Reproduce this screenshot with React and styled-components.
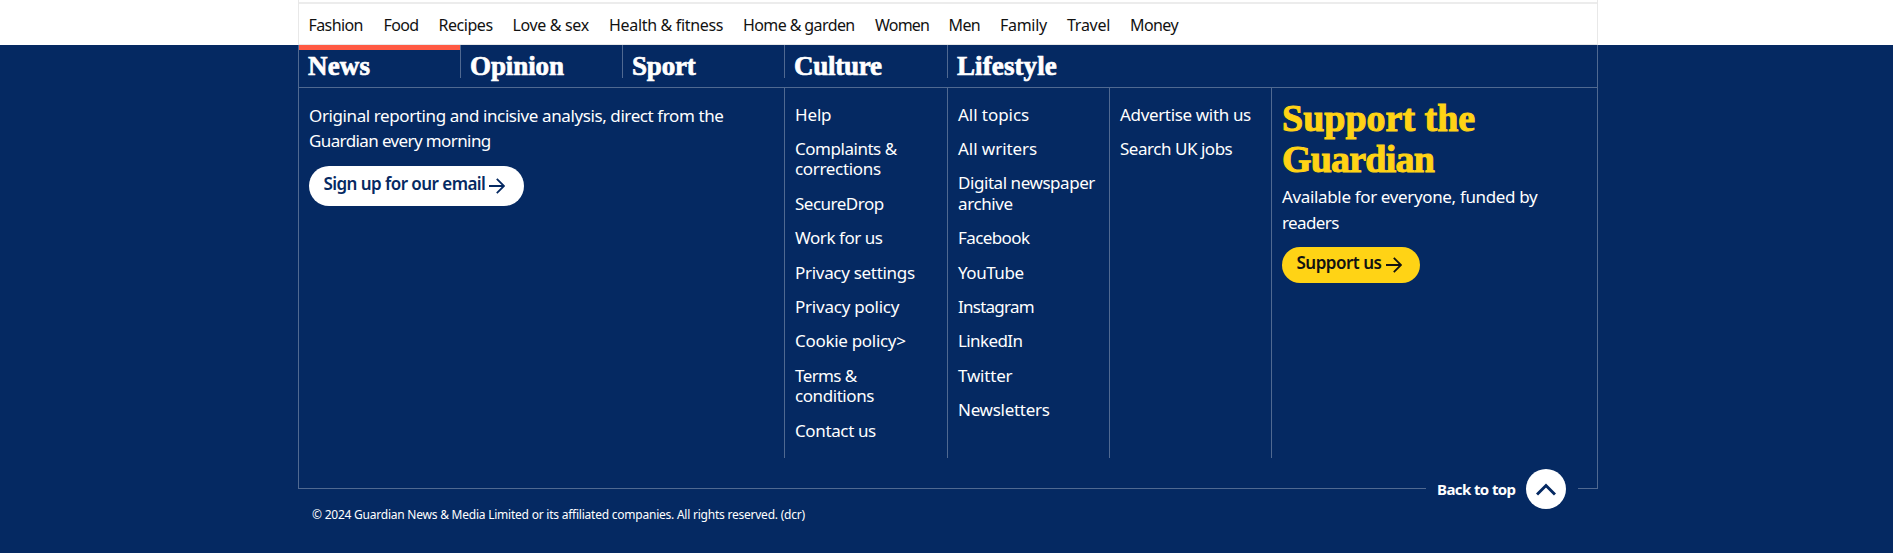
import React from 'react';
import styled, { createGlobalStyle, css } from 'styled-components';

const navy = '#052962';
const line = '#506991';
const sans = '"Noto Sans", "Open Sans", sans-serif';
const serif = '"Liberation Serif", "Times New Roman", serif';

const GlobalStyle = createGlobalStyle`
  * { box-sizing: border-box; }
  body { margin: 0; background: ${navy}; font-family: ${sans}; color: #fff; }
  ul { list-style: none; margin: 0; padding: 0; }
  p, h2 { margin: 0; }
  a { color: inherit; text-decoration: none; }
`;

const Page = styled.div`
  height: 553px;
  overflow: hidden;
`;

const TopBar = styled.div`
  height: 45px;
  background: #fff;
`;

const TopFrame = styled.div`
  width: 1300px;
  height: 45px;
  margin: 0 auto 0 298px;
  padding-top: 2px;
  border: solid #e8e8e8;
  border-width: 0 1px 1px;
`;

const TopicList = styled.ul`
  display: flex;
  height: 42px;
  padding: 10px 0 0 9.5px;
  border-top: 2px solid #ececec;
  font-size: 16px;
  line-height: 22px;
  color: #121212;
`;

const Topic = styled.li`
  width: ${(p) => p.$width}px;
  letter-spacing: ${(p) => p.$spacing}px;
  white-space: nowrap;
`;

const Frame = styled.footer`
  width: 1300px;
  height: 444px;
  margin-left: 298px;
  border: solid ${line};
  border-width: 0 1px 0;
`;

const Pillars = styled.ul`
  display: flex;
  height: 43px;
  border-bottom: 1px solid ${line};
`;

const Pillar = styled.li`
  width: ${(p) => p.$width}px;
  height: 33px;
  padding: 6px 0 0 9px;
  border-left: ${(p) => (p.$active ? 'none' : `1px solid ${line}`)};
  box-shadow: ${(p) => (p.$active ? 'inset 0 5px 0 #ff5943' : 'none')};
  font: bold 27px/30px ${serif};
  letter-spacing: ${(p) => p.$spacing}px;
  -webkit-text-stroke: 0.7px currentColor;
`;

const Columns = styled.div`
  display: flex;
  height: 370px;
`;

const Column = styled.section`
  width: ${(p) => p.$width}px;
  padding: ${(p) => p.$top}px 0 0 10px;
  ${(p) => p.$ruled && css`border-left: 1px solid ${line};`}
`;

const Copy = styled.p`
  margin-top: ${(p) => p.$gap || 0}px;
  font-size: 17px;
  line-height: ${(p) => p.$leading}px;
  white-space: nowrap;
`;

const TextLine = styled.span`
  display: block;
  letter-spacing: ${(p) => p.$spacing}px;
`;

const Links = styled.ul`
  display: flex;
  flex-direction: column;
  gap: 14px;
  font-size: 17px;
  line-height: 20.4px;
  white-space: nowrap;
`;

const SupportHeading = styled.h2`
  font: bold 38px/41px ${serif};
  color: #ffd315;
  white-space: nowrap;
  -webkit-text-stroke: 1px currentColor;
`;

const Pill = styled.a`
  display: flex;
  align-items: center;
  width: ${(p) => p.$width}px;
  height: ${(p) => p.$height}px;
  margin-top: ${(p) => p.$gap}px;
  padding: 0 0 4px 14.5px;
  border-radius: 20px;
  background: ${(p) => p.$fill};
  color: ${(p) => p.$ink};
  font-size: 17px;
  font-weight: 600;
  line-height: 24px;
  white-space: nowrap;
`;

const PillLabel = styled.span`
  width: ${(p) => p.$width}px;
  letter-spacing: ${(p) => p.$spacing}px;
`;

const PillArrow = styled.svg`
  display: block;
  margin-top: 4px;
`;

const BottomRule = styled.div`
  display: flex;
  justify-content: flex-end;
  height: 31px;
`;

const Rule = styled.span`
  width: ${(p) => p.$width}px;
  border-bottom: 1px solid ${line};
`;

const BackToTop = styled.a`
  display: flex;
  align-items: center;
  flex-shrink: 0;
  width: 152px;
  height: 40px;
  margin-top: 11px;
  padding-left: 11px;
  font-size: 15px;
  font-weight: 700;
  letter-spacing: -0.6px;
  white-space: nowrap;
`;

const TopLabel = styled.span`
  width: 89px;
`;

const Circle = styled.span`
  display: grid;
  place-items: center;
  width: 40px;
  height: 40px;
  border-radius: 50%;
  background: #fff;
`;

const Copyright = styled.p`
  padding: 17px 0 0 312px;
  font-size: 12px;
  line-height: 18px;
  letter-spacing: -0.23px;
`;

const topics = [
  ['Fashion', 75, -0.6],
  ['Food', 55, -0.6],
  ['Recipes', 74, -0.45],
  ['Love & sex', 96.5, -0.35],
  ['Health & fitness', 134, -0.32],
  ['Home & garden', 132, -0.6],
  ['Women', 73.5, -0.8],
  ['Men', 51.5, -0.6],
  ['Family', 67, -0.3],
  ['Travel', 63, -0.25],
  ['Money', 60, -0.6],
];

const pillars = [
  ['News', 161, 0.15],
  ['Opinion', 162, -0.1],
  ['Sport', 162, -0.2],
  ['Culture', 163, -0.25],
  ['Lifestyle', 162, 0.1],
];

const helpLinks = [
  [['Help', -0.15]],
  [['Complaints &', -0.47], ['corrections', -0.33]],
  [['SecureDrop', -0.5]],
  [['Work for us', -0.45]],
  [['Privacy settings', -0.3]],
  [['Privacy policy', -0.23]],
  [['Cookie policy>', -0.3]],
  [['Terms &', -0.6], ['conditions', -0.43]],
  [['Contact us', -0.37]],
];

const siteLinks = [
  [['All topics', -0.05]],
  [['All writers', -0.05]],
  [['Digital newspaper', -0.44], ['archive', -0.4]],
  [['Facebook', -0.6]],
  [['YouTube', -0.45]],
  [['Instagram', -0.75]],
  [['LinkedIn', -0.6]],
  [['Twitter', -0.2]],
  [['Newsletters', -0.28]],
];

const businessLinks = [[['Advertise with us', -0.34]], [['Search UK jobs', -0.47]]];

const Lines = ({ lines }) =>
  lines.map(([text, spacing]) => (
    <TextLine key={text} $spacing={spacing}>{text}</TextLine>
  ));

const LinkList = ({ items }) => (
  <Links>
    {items.map((lines) => (
      <li key={lines[0][0]}><a href="#"><Lines lines={lines} /></a></li>
    ))}
  </Links>
);

const Arrow = () => (
  <PillArrow width="16" height="16" viewBox="0 0 16 16" fill="none" stroke="currentColor" strokeWidth="1.8">
    <path d="M0 8H14.5M7.8 0.8L15 8L7.8 15.2" />
  </PillArrow>
);

export default function App() {
  return (
    <Page>
      <GlobalStyle />
      <TopBar>
        <TopFrame>
          <TopicList>
            {topics.map(([name, width, spacing]) => (
              <Topic key={name} $width={width} $spacing={spacing}>{name}</Topic>
            ))}
          </TopicList>
        </TopFrame>
      </TopBar>
      <Frame>
        <Pillars>
          {pillars.map(([name, width, spacing], i) => (
            <Pillar key={name} $width={width} $spacing={spacing} $active={i === 0}>{name}</Pillar>
          ))}
        </Pillars>
        <Columns>
          <Column $width={485} $top={15}>
            <Copy $leading={25}>
              <Lines lines={[['Original reporting and incisive analysis, direct from the', -0.4], ['Guardian every morning', -0.61]]} />
            </Copy>
            <Pill href="#" $width={215} $height={40} $gap={13} $fill="#fff" $ink={navy}>
              <PillLabel $width={165.5} $spacing={-0.56}>Sign up for our email</PillLabel>
              <Arrow />
            </Pill>
          </Column>
          <Column $ruled $width={163} $top={16.6}><LinkList items={helpLinks} /></Column>
          <Column $ruled $width={162} $top={16.6}><LinkList items={siteLinks} /></Column>
          <Column $ruled $width={162} $top={16.6}><LinkList items={businessLinks} /></Column>
          <Column $ruled $width={326} $top={10}>
            <SupportHeading>
              <Lines lines={[['Support the', 0], ['Guardian', -0.8]]} />
            </SupportHeading>
            <Copy $leading={25.5} $gap={4}>
              <Lines lines={[['Available for everyone, funded by', -0.35], ['readers', -0.6]]} />
            </Copy>
            <Pill href="#" $width={138} $height={36} $gap={12} $fill="#ffd315" $ink="#121212">
              <PillLabel $width={89.5} $spacing={-0.5}>Support us</PillLabel>
              <Arrow />
            </Pill>
          </Column>
        </Columns>
        <BottomRule>
          <Rule $width={1127} />
          <BackToTop href="#">
            <TopLabel>Back to top</TopLabel>
            <Circle>
              <svg width="20" height="13" viewBox="0 0 20 13" fill="none" stroke={navy} strokeWidth="3">
                <path d="M1 11.5L10 2.5L19 11.5" />
              </svg>
            </Circle>
          </BackToTop>
          <Rule $width={19} />
        </BottomRule>
      </Frame>
      <Copyright>© 2024 Guardian News &amp; Media Limited or its affiliated companies. All rights reserved. (dcr)</Copyright>
    </Page>
  );
}
